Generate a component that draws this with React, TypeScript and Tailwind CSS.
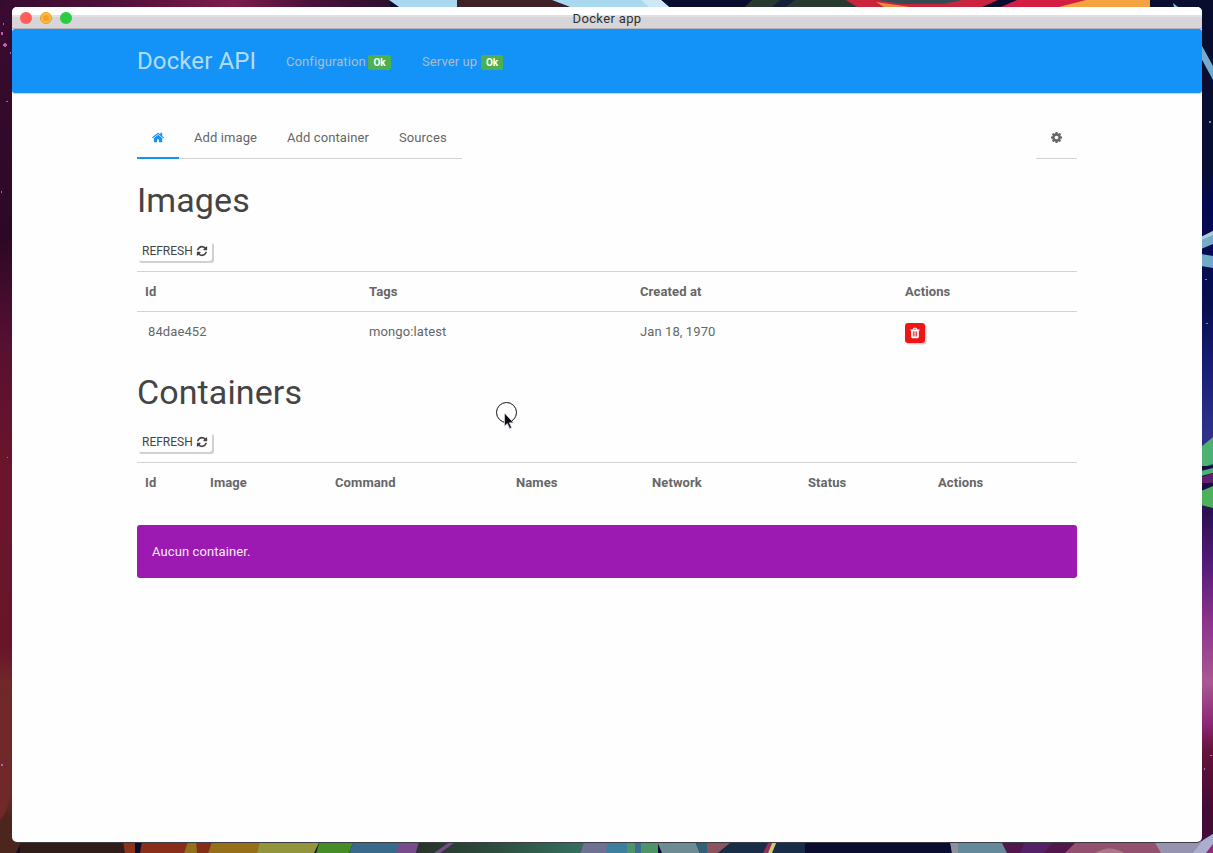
import React from 'react';

const HOME =
  'M1408 992v480q0 26-19 45t-45 19h-384v-384h-256v384h-384q-26 0-45-19t-19-45v-480q0-1 .5-3t.5-3l575-474 575 474q1 2 1 6zm223-69l-62 74q-8 9-21 11h-3q-13 0-21-7l-692-577-692 577q-12 8-24 7-13-2-21-11l-62-74q-8-10-7-23.5t11-21.5l719-599q32-26 76-26t76 26l244 204v-195q0-14 9-23t23-9h192q14 0 23 9t9 23v408l219 182q10 8 11 21.5t-7 23.5z';
const REFRESH =
  'M1639 1056q0 5-1 7-64 268-268 434.5t-478 166.5q-146 0-282.5-55t-243.5-157l-129 129q-19 19-45 19t-45-19-19-45v-448q0-26 19-45t45-19h448q26 0 45 19t19 45-19 45l-137 137q71 66 161 102t187 36q134 0 250-65t186-179q11-17 53-117 8-23 30-23h192q13 0 22.5 9.5t9.5 22.5zm25-800v448q0 26-19 45t-45 19h-448q-26 0-45-19t-19-45 19-45l138-138q-148-137-349-137-134 0-250 65t-186 179q-11 17-53 117-8 23-30 23h-199q-13 0-22.5-9.5t-9.5-22.5v-7q65-268 270-434.5t480-166.5q146 0 284 55.5t245 156.5l130-129q19-19 45-19t45 19 19 45z';
const COG =
  'M1152 896q0-106-75-181t-181-75-181 75-75 181 75 181 181 75 181-75 75-181zm512-109v222q0 12-8 23t-20 13l-185 28q-19 54-39 91 35 50 107 138 10 12 10 25t-9 23q-27 37-99 108t-94 71q-12 0-26-9l-138-108q-44 23-91 38-16 136-29 186-7 28-36 28h-222q-14 0-24.5-8.5t-11.5-21.5l-28-184q-49-16-90-37l-141 107q-10 9-25 9-14 0-25-11-126-114-165-168-7-10-7-23 0-12 8-23 15-21 51-66.5t54-70.5q-27-50-41-99l-183-27q-13-2-21-12.5t-8-23.5v-222q0-12 8-23t19-13l186-28q14-46 39-92-40-57-107-138-10-12-10-24 0-10 9-23 26-36 98.5-107.5t94.5-71.5q13 0 26 10l138 107q44-23 91-38 16-136 29-186 7-28 36-28h222q14 0 24.5 8.5t11.5 21.5l28 184q49 16 90 37l142-107q9-9 24-9 13 0 25 10 129 119 165 170 7 8 7 22 0 12-8 23-15 21-51 66.5t-54 70.5q26 50 41 98l183 28q13 2 21 12.5t8 23.5z';
const TRASH =
  'M704 1376v-704q0-14-9-23t-23-9h-64q-14 0-23 9t-9 23v704q0 14 9 23t23 9h64q14 0 23-9t9-23zm256 0v-704q0-14-9-23t-23-9h-64q-14 0-23 9t-9 23v704q0 14 9 23t23 9h64q14 0 23-9t9-23zm256 0v-704q0-14-9-23t-23-9h-64q-14 0-23 9t-9 23v704q0 14 9 23t23 9h64q14 0 23-9t9-23zm-544-992h448l-48-117q-7-9-17-11h-317q-10 2-17 11zm928 32v64q0 14-9 23t-23 9h-96v948q0 83-47 143.5t-113 60.5h-832q-66 0-113-58.5t-47-141.5v-952h-96q-14 0-23-9t-9-23v-64q0-14 9-23t23-9h309l70-167q15-37 54-63t79-26h320q40 0 79 26t54 63l70 167h309q14 0 23 9t9 23z';

function Icon({ path, className }: { path: string; className: string }) {
  return (
    <svg viewBox="0 0 1792 1792" className={className} fill="currentColor" aria-hidden="true">
      <path d={path} />
    </svg>
  );
}

function Wallpaper() {
  return (
    <svg className="absolute inset-0" width="1213" height="853" viewBox="0 0 1213 853" aria-hidden="true">
      <defs>
        <linearGradient id="left" x1="0" y1="0" x2="0" y2="1">
          <stop offset="0" stopColor="#3b0a33" />
          <stop offset="0.1" stopColor="#350a2c" />
          <stop offset="0.28" stopColor="#2c0826" />
          <stop offset="0.4" stopColor="#561030" />
          <stop offset="0.55" stopColor="#6b152d" />
          <stop offset="0.76" stopColor="#68152a" />
          <stop offset="0.8" stopColor="#702828" />
          <stop offset="0.93" stopColor="#6a2927" />
          <stop offset="0.96" stopColor="#4c251d" />
        </linearGradient>
        <linearGradient id="right" x1="0" y1="0" x2="0" y2="1">
          <stop offset="0" stopColor="#080d2e" />
          <stop offset="0.2" stopColor="#080d35" />
          <stop offset="0.24" stopColor="#040852" />
          <stop offset="0.36" stopColor="#08104f" />
          <stop offset="0.42" stopColor="#151c72" />
          <stop offset="0.51" stopColor="#303289" />
          <stop offset="0.6" stopColor="#2c1052" />
          <stop offset="0.66" stopColor="#531b78" />
          <stop offset="0.73" stopColor="#8d348c" />
          <stop offset="0.8" stopColor="#a95894" />
          <stop offset="0.85" stopColor="#8b2575" />
          <stop offset="0.88" stopColor="#661239" />
          <stop offset="0.95" stopColor="#430b37" />
        </linearGradient>
        <linearGradient id="top" x1="0" y1="0" x2="1" y2="0">
          <stop offset="0" stopColor="#360a30" />
          <stop offset="0.3" stopColor="#511039" />
          <stop offset="0.6" stopColor="#7c1d4b" />
          <stop offset="0.8" stopColor="#49103a" />
          <stop offset="1" stopColor="#2d102c" />
        </linearGradient>
        <linearGradient id="bottom" x1="0" y1="0" x2="1" y2="0">
          <stop offset="0" stopColor="#28332c" />
          <stop offset="0.4" stopColor="#2c493a" />
          <stop offset="1" stopColor="#35705f" />
        </linearGradient>
      </defs>
      <rect width="1213" height="853" fill="#0a0d30" />
      <rect width="13" height="853" fill="url(#left)" />
      <path d="M0 700H11V790Q8 812 0 820z" fill="#702829" />
      <rect x="1200" width="13" height="853" fill="url(#right)" />
      <rect width="390" height="8" fill="url(#top)" />
      <g fill="#c25bab">
        <rect x="1" y="32" width="2" height="3" />
        <rect x="3" y="44" width="4" height="2" />
        <rect x="4" y="43" width="2" height="4" />
        <rect x="10" y="52" width="1" height="2" />
        <rect x="3" y="23" width="1" height="2" />
        <rect x="6" y="101" width="2" height="1" />
        <rect x="1" y="191" width="1" height="2" />
        <rect x="7" y="457" width="1" height="1" />
        <rect x="1" y="764" width="2" height="2" />
      </g>
      <path d="M389 0H457V7H399z" fill="#a9d8ef" />
      <path d="M457 0H552L568 7H457z" fill="#3f2026" />
      <path d="M552 0H661L669 7H570z" fill="#a9d8ef" />
      <path d="M641 0H661L669 7H649z" fill="#cfe8f4" />
      <path d="M752 0H848L857 7H745z" fill="#293b31" />
      <path d="M780 0H795L786 7H772z" fill="#16203b" />
      <path d="M846 0H998L982 7H857z" fill="#c9243e" />
      <path d="M878 0H962L944 4H900z" fill="#364a51" />
      <path d="M876 2L910 7H884z" fill="#eb8a3f" />
      <path d="M1017 0H1095L1061 7H1001z" fill="#d41d42" />
      <path d="M1086 0H1150V7H1059z" fill="#f4a340" />
      <path d="M1173 3L1178 7H1174z" fill="#82bbd4" />
      <path d="M1201 44L1213 66V80L1201 58z" fill="#70add0" />
      <path d="M1201 237L1213 231V244L1201 249z" fill="#77acc9" />
      <path d="M1201 237L1213 231V235L1201 240z" fill="#aecbda" />
      <path d="M1201 254L1213 256V268L1201 266z" fill="#70aac8" />
      <path d="M1201 447L1213 437V464L1201 468z" fill="#4eb174" />
      <path d="M1201 466H1213V490H1201z" fill="#1b0b48" />
      <path d="M1201 471L1213 468V473L1201 476z" fill="#4eb174" />
      <path d="M1202 477L1213 473V483H1202z" fill="#601f70" />
      <path d="M1201 491L1213 486V508L1201 505z" fill="#4eb05a" />
      <g fill="#8f83a7">
        <rect x="1209" y="121" width="2" height="2" />
        <rect x="1205" y="279" width="2" height="1" />
        <rect x="1206" y="323" width="2" height="1" />
        <rect x="1210" y="755" width="2" height="1" />
        <rect x="1204" y="768" width="1" height="2" />
      </g>
      <rect x="20" y="841" width="110" height="12" fill="#301d19" />
      <path d="M0 841H22L16 853H0z" fill="#4c251d" />
      <path d="M123 841H135V853H125z" fill="#8d3319" />
      <path d="M142 841H188L184 853H140z" fill="#8a2d19" />
      <path d="M188 841H198V853H184z" fill="#94701d" />
      <path d="M196 841H212L208 853H197z" fill="#862d18" />
      <path d="M212 841H270L264 853H208z" fill="#976f19" />
      <path d="M260 841H320L314 853H257z" fill="#93953c" />
      <path d="M320 841H354L349 853H316z" fill="#468d28" />
      <path d="M354 841H406L400 853H349z" fill="#39698b" />
      <path d="M400 841H420L416 853H396z" fill="#774b8c" />
      <path d="M419 841H584L580 853H416z" fill="url(#bottom)" />
      <path d="M451 841H457L440 853H434z" fill="#774b8c" />
      <path d="M584 841H610L608 853H580z" fill="#6e7192" />
      <path d="M608 841H628V853H606z" fill="#3d7f9e" />
      <path d="M627 841H658V853H627z" fill="#4e9468" />
      <path d="M635 841H641V853H635z" fill="#3b6f91" />
      <path d="M657 841H695L700 853H662z" fill="#6c8b93" />
      <path d="M695 841H708V853H700z" fill="#326077" />
      <path d="M707 841H733L718 853H707z" fill="#8b535d" />
      <path d="M733 841H805V853H718z" fill="#182d47" />
      <path d="M769 841H774L768 853H763z" fill="#942d57" />
      <path d="M773 841H777L772 853H768z" fill="#d5c875" />
      <path d="M950 841H1005L1009 853H952z" fill="#63899a" />
      <path d="M950 841H958V853H952z" fill="#918f99" />
      <path d="M1001 841H1160V853H1007z" fill="#52154c" />
      <path d="M1025 841H1054L1044 853H1020z" fill="#552067" />
      <path d="M1077 841H1155L1162 853H1065z" fill="#93516f" />
      <path d="M1095 853Q1110 844 1124 853z" fill="#ad7788" />
      <path d="M1154 841H1203L1213 834V853H1161z" fill="#9693b0" />
      <path d="M1203 840L1213 834V844L1206 853H1193z" fill="#aaafd0" />
      <path d="M1206 853L1213 844V853z" fill="#922c78" />
    </svg>
  );
}

function RefreshButton() {
  return (
    <button className="flex h-5 w-[75px] items-center gap-[3px] rounded-[3px] bg-[#fefefe] pl-[5px] text-[12px] leading-none tracking-normal text-[#444] shadow-[2px_2px_0_#d0d0d0]">
      REFRESH
      <Icon path={REFRESH} className="h-3 w-3" />
    </button>
  );
}

function Status({ label, className, badge }: { label: string; className: string; badge: string }) {
  return (
    <div className={`flex items-center ${className}`}>
      <span className="flex-1 pt-px whitespace-nowrap text-[#aebccb]">{label}</span>
      <span
        className={`mt-0.5 flex h-[15px] items-center justify-center rounded-[2px] bg-[#4caf50] pt-px text-[10px] leading-none font-bold tracking-normal text-white ${badge}`}
      >
        Ok
      </span>
    </div>
  );
}

export default function App() {
  return (
    <div className="relative h-[853px] w-[1213px] overflow-hidden font-['Roboto',sans-serif] text-[13px] leading-5 tracking-[0.1px] text-[#666]">
      <Wallpaper />
      <div className="relative mt-[7px] ml-3 flex h-[835px] w-[1190px] flex-col overflow-hidden rounded-[5px] bg-[#fefefe] shadow-[0_1px_0_#3c3c44]">
        <header className="relative flex h-[22px] shrink-0 items-center justify-center border-b border-[#b5b3b5] bg-[linear-gradient(#fff_0_8px,#e2e0e2_8px_10px,#d7d5d8_10px)]">
          <div className="absolute top-[5px] left-2 flex gap-2">
            <span className="h-3 w-3 rounded-full bg-[#ff5f58]" />
            <span className="flex h-3 w-3 items-center justify-center rounded-full border border-[#e3a02d] bg-[#ffbd2e]">
              <span className="h-1.5 w-1.5 rounded-full bg-[#f0a030]" />
            </span>
            <span className="h-3 w-3 rounded-full bg-[#28cd41]" />
          </div>
          <span className="pt-[3px] text-[13px] tracking-[0.35px] text-[#303030]">Docker app</span>
        </header>

        <nav className="h-16 shrink-0 rounded-[3px] bg-[#1393f8] shadow-[0_1px_0_#c9d5df]">
          <div className="mx-auto flex h-full w-[940px] items-center">
            <a className="w-[149px] pb-px text-2xl leading-5 tracking-[0.1px] whitespace-nowrap text-[#b3dcfa]">
              Docker API
            </a>
            <Status label="Configuration" className="w-[105px]" badge="w-[23px]" />
            <Status label="Server up" className="ml-[31px] w-[81px]" badge="w-[22px]" />
          </div>
        </nav>

        <main className="mx-auto w-[940px]">
          <div className="mt-[25px] flex h-[41px] justify-between">
            <div className="flex">
              <a className="flex w-[42px] items-start justify-center border-b-2 border-[#1393f8] pt-[13px] text-[#1393f8]">
                <Icon path={HOME} className="h-[13px] w-[13px]" />
              </a>
              <a className="w-[93px] border-b border-[#d2d2d2] pt-[10px] pl-[15px] whitespace-nowrap">Add image</a>
              <a className="w-[112px] border-b border-[#d2d2d2] pt-[10px] pl-[15px] whitespace-nowrap">
                Add container
              </a>
              <a className="w-[78px] border-b border-[#d2d2d2] pt-[10px] pl-[15px]">Sources</a>
            </div>
            <a className="flex w-[41px] items-start justify-center border-b border-[#d2d2d2] pt-[13px]">
              <Icon path={COG} className="h-[13px] w-[13px]" />
            </a>
          </div>

          <section className="pt-[21px]">
            <h1 className="text-[34px] leading-10 text-[#444]">Images</h1>
            <div className="mt-[21px] mb-[10px]">
              <RefreshButton />
            </div>
            <div className="grid h-10 grid-cols-[224px_271px_265px_180px] items-center border-t border-[#d2d2d2] pl-2 font-bold">
              <span>Id</span>
              <span>Tags</span>
              <span>Created at</span>
              <span>Actions</span>
            </div>
            <div className="grid h-10 grid-cols-[224px_271px_265px_180px] items-center border-t border-[#d2d2d2] pl-2">
              <span className="pl-[3px]">84dae452</span>
              <span>mongo:latest</span>
              <span>Jan 18, 1970</span>
              <button className="mt-[3px] flex h-5 w-5 items-center justify-center rounded-[3px] bg-[#ed1515] text-white shadow-[1.5px_1.5px_0_#cbd0d0]">
                <Icon path={TRASH} className="h-3 w-3" />
              </button>
            </div>
          </section>

          <section className="pt-[21px]">
            <h1 className="text-[34px] leading-10 text-[#444]">Containers</h1>
            <div className="mt-5 mb-[10px]">
              <RefreshButton />
            </div>
            <div className="grid h-10 grid-cols-[65px_125px_181px_136px_156px_130px_139px] items-center border-t border-[#d2d2d2] pl-2 font-bold">
              <span>Id</span>
              <span>Image</span>
              <span>Command</span>
              <span>Names</span>
              <span>Network</span>
              <span>Status</span>
              <span>Actions</span>
            </div>
            <div className="mt-[23px] flex h-[53px] items-center rounded-[3px] bg-[#9c1ab1] pl-[15px] text-[#f6eaf8]">
              Aucun container.
            </div>
          </section>
        </main>
      </div>

      <svg className="absolute top-[400px] left-[494px]" width="26" height="32" viewBox="0 0 26 32" aria-hidden="true">
        <circle cx="12.5" cy="12.5" r="10" fill="none" stroke="#111" />
        <path d="M10 13V26.5L13 24L15.3 29.3L18.3 28L16 23.2H20z" fill="#bbb" opacity="0.7" />
        <path d="M10.5 13V26.2L13.3 23.5L15.7 28.6L17.6 27.7L15.3 22.8H19.5z" fill="#0b0d14" stroke="#fff" strokeWidth="0.6" />
      </svg>
    </div>
  );
}
